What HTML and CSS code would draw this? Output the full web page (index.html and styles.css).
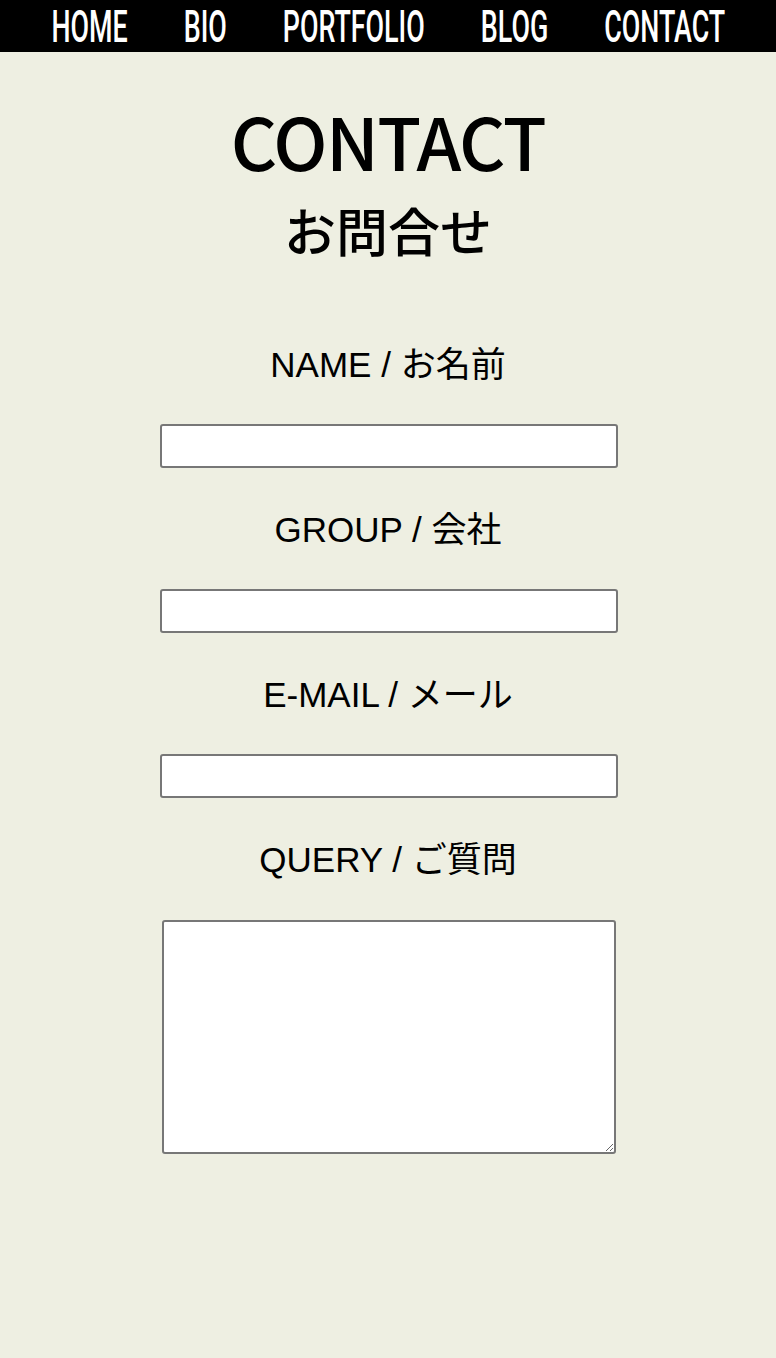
FILE: index.html
```html
<!DOCTYPE html>
<html lang="ja">
<head>
<meta charset="utf-8">
<title>CONTACT</title>
<link rel="stylesheet" href="styles.css">
</head>
<body>
<nav class="nav">
  <ul class="nav-list">
    <li><a href="#">HOME</a></li>
    <li><a href="#">BIO</a></li>
    <li><a href="#">PORTFOLIO</a></li>
    <li><a href="#">BLOG</a></li>
    <li><a href="#">CONTACT</a></li>
  </ul>
</nav>
<main class="main">
  <h1 class="title">CONTACT</h1>
  <h2 class="subtitle">お問合せ</h2>
  <form class="form">
    <label class="label" for="name">NAME / お名前</label>
    <input class="field" type="text" id="name">
    <label class="label" for="group">GROUP / 会社</label>
    <input class="field" type="text" id="group">
    <label class="label" for="mail">E-MAIL / メール</label>
    <input class="field" type="email" id="mail">
    <label class="label" for="query">QUERY / ご質問</label>
    <textarea class="area" id="query"></textarea>
  </form>
</main>
</body>
</html>
```
FILE: styles.css
```css
html, body {
  margin: 0;
  padding: 0;
  background: #eeefe2;
}
body {
  font-family: "Liberation Sans", "Noto Sans CJK JP", sans-serif;
  color: #000;
  min-height: 1358px;
}
.nav {
  background: #000;
  height: 52px;
  display: flex;
  justify-content: center;
  overflow: hidden;
}
.nav-list {
  list-style: none;
  margin: 0;
  padding: 0;
  display: flex;
  flex: none;
  gap: 92px;
  transform: scaleX(0.61);
  transform-origin: center;
}
.nav-list a {
  display: block;
  color: #fff;
  text-decoration: none;
  font-family: Roboto, sans-serif;
  font-weight: 500;
  font-size: 44px;
  line-height: 52px;
  padding-top: 1px;
}
.main {
  display: flex;
  flex-direction: column;
  align-items: center;
}
.title {
  margin: 49px 0 0;
  font-family: "Noto Sans CJK JP", sans-serif;
  font-weight: 500;
  font-size: 72px;
  line-height: 78px;
  letter-spacing: -1.5px;
}
.subtitle {
  margin: 21px 0 0;
  font-family: "Noto Sans CJK JP", sans-serif;
  font-weight: 500;
  font-size: 52px;
  line-height: 60px;
}
.form {
  display: flex;
  flex-direction: column;
  align-items: center;
  margin-top: 85px;
}
.label {
  display: block;
  font-size: 35px;
  line-height: 40px;
  margin-bottom: 39px;
}
.field {
  box-sizing: border-box;
  width: 458px;
  height: 44px;
  margin: 0 0 42px 2px;
  border: 2px solid #777;
  border-radius: 3px;
  background: #fff;
  padding: 0 4px;
  font-size: 16px;
}
.area {
  box-sizing: border-box;
  width: 454px;
  height: 234px;
  margin: 1px 0 0 2px;
  border: 2px solid #777;
  border-radius: 3px;
  background: #fff;
}
```
